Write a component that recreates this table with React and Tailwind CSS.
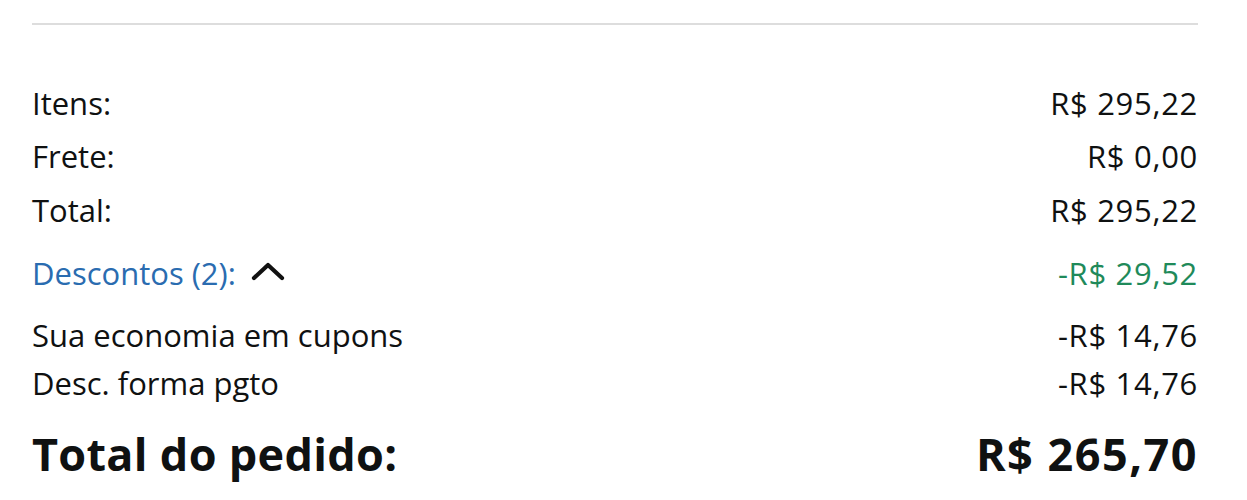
import React from "react";

function Row({ h, label, value, labelClass = "", valueClass = "" }) {
  return (
    <div className={`flex items-center justify-between ${h}`}>
      <div className={labelClass}>{label}</div>
      <div className={`tracking-[0.7px] ${valueClass}`}>{value}</div>
    </div>
  );
}

export default function App() {
  return (
    <div
      className="w-[1247px] h-[500px] bg-white overflow-hidden pl-[32px] pr-[49px] pt-[23px] text-[#0f1111]"
      style={{ fontFamily: '"Open Sans", "Noto Sans", sans-serif' }}
    >
      <div className="h-[2px] bg-[#dddddd]" />
      <div className="mt-[51px] text-[31px] leading-none tracking-[0px]">
        <Row h="h-[54px]" label="Itens:" value="R$ 295,22" />
        <Row h="h-[53px]" label="Frete:" value="R$ 0,00" />
        <Row h="h-[54px]" label="Total:" value="R$ 295,22" />
        <div className="flex items-center justify-between h-[72px]">
          <div className="flex items-center">
            <span className="text-[#2a6cb0]">Descontos (2):</span>
            <svg
              className="ml-[15px] mb-[4px]"
              width="34"
              height="20"
              viewBox="0 0 34 20"
              fill="none"
            >
              <path
                d="M3 17 L17 4 L31 17"
                stroke="#111111"
                strokeWidth="4.2"
                strokeLinecap="round"
                strokeLinejoin="round"
              />
            </svg>
          </div>
          <div className="text-[#1f8a5a] tracking-[0.7px]">-R$ 29,52</div>
        </div>
        <Row h="h-[52px]" label="Sua economia em cupons" value="-R$ 14,76" />
        <Row h="h-[44px]" label="Desc. forma pgto" value="-R$ 14,76" />
        <div className="flex items-center justify-between h-[96px] text-[45px] font-bold tracking-[0.3px]">
          <div>Total do pedido:</div>
          <div className="tracking-[1.5px]">R$ 265,70</div>
        </div>
      </div>
    </div>
  );
}
